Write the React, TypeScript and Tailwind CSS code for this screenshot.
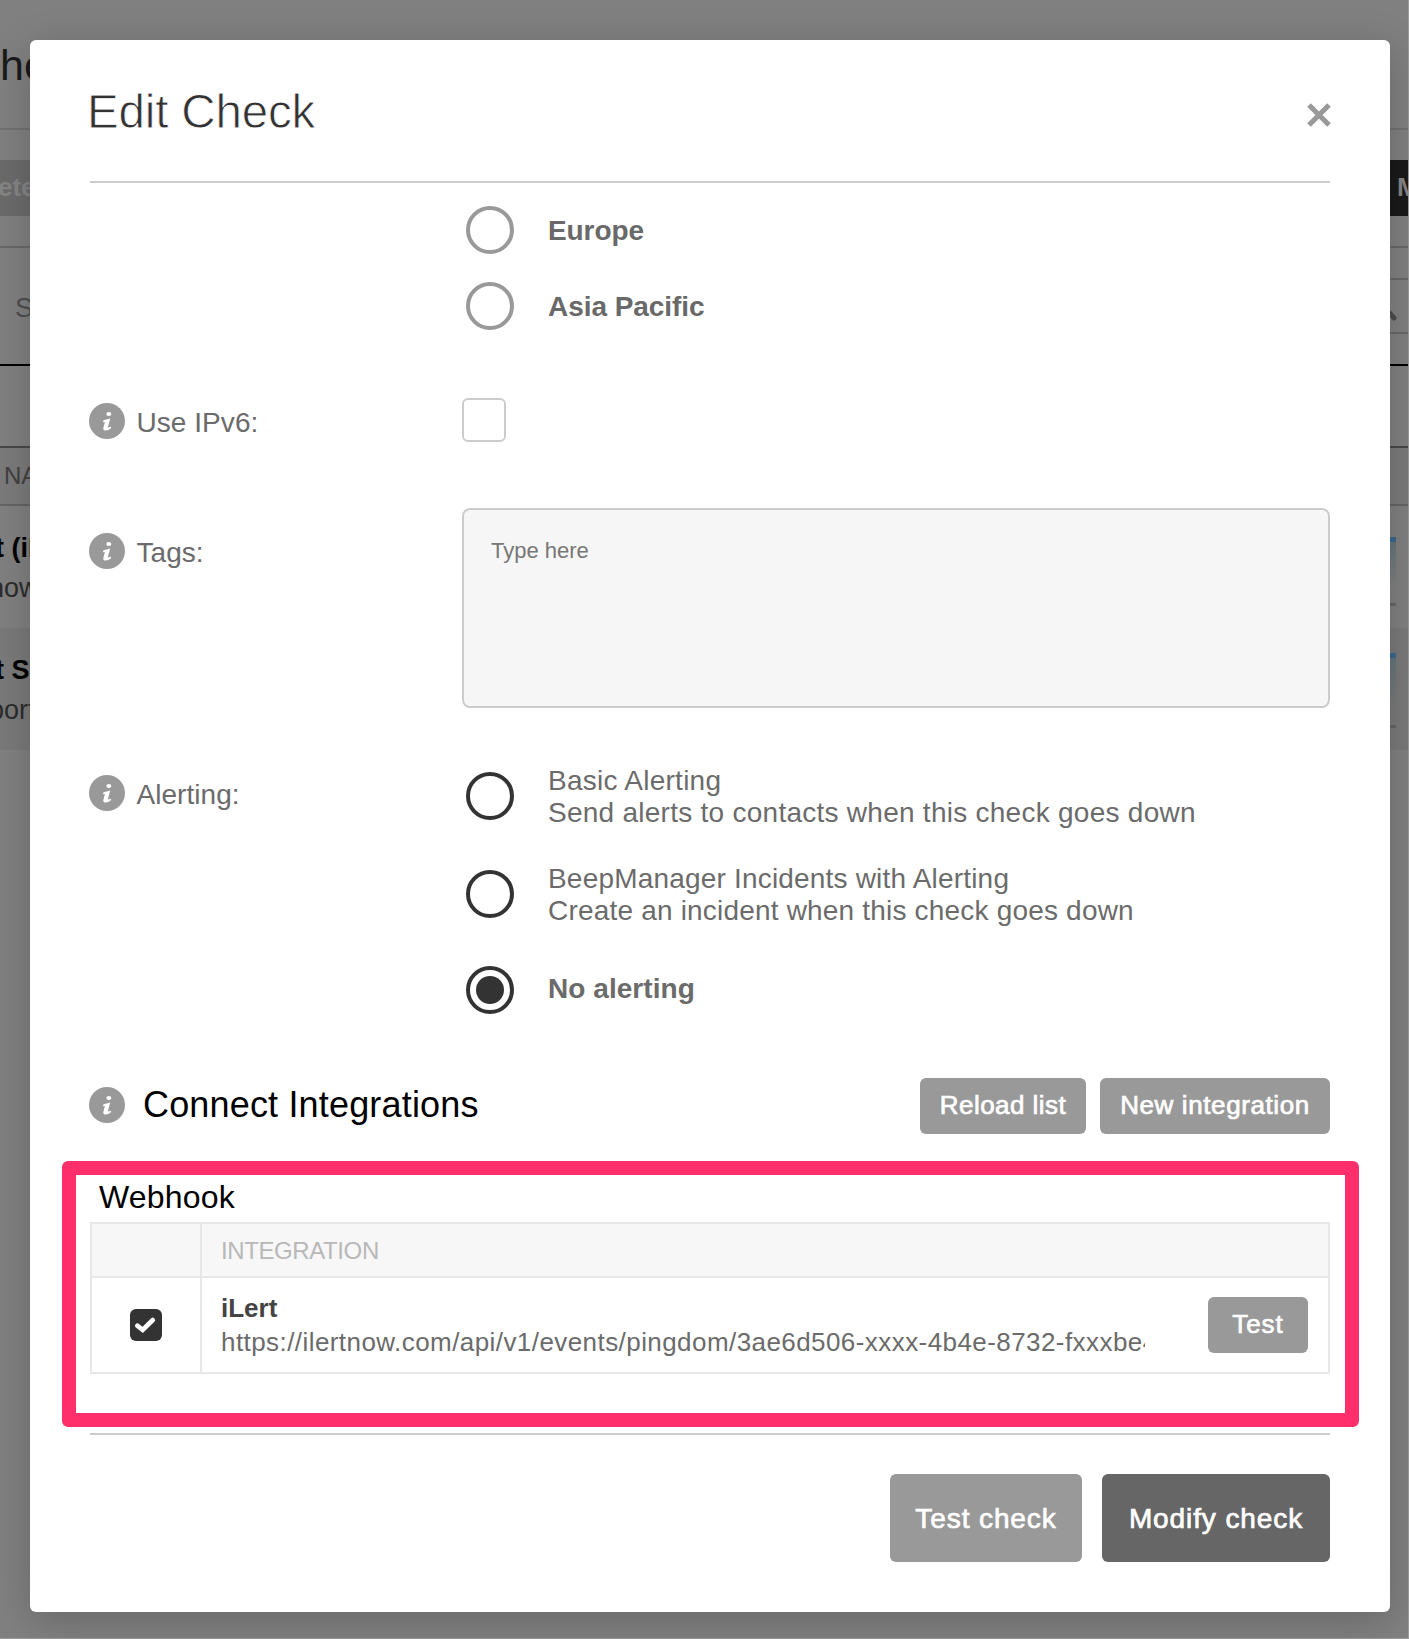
import React from "react";

function InfoIcon() {
  return (
    <svg viewBox="0 0 36 36" className="-ml-px size-9 shrink-0" aria-hidden="true">
      <circle cx="18" cy="18" r="18" fill="#999" />
      <ellipse cx="19.8" cy="11" rx="2.5" ry="2.1" fill="#fff" />
      <path
        d="M14.6 17.2 L21.2 15.6 L18.8 24.6 Q19.9 24.7 21.5 23.6 L22.2 24.9 Q19.5 27.6 16.6 27.6 Q13.7 27.6 14.4 24.8 L15.9 19 L13.8 19.2 Z"
        fill="#fff"
      />
    </svg>
  );
}

function Label({ children }: { children: React.ReactNode }) {
  return (
    <div className="flex h-9 items-center gap-[11.5px] text-[28px] leading-9 tracking-[0.05px] text-[#6b6b6b]">
      <InfoIcon />
      <span className="mt-[4px]">{children}</span>
    </div>
  );
}

function Radio({ dark, checked }: { dark?: boolean; checked?: boolean }) {
  return (
    <span
      className={`flex size-12 shrink-0 items-center justify-center rounded-full border-4 ${
        dark ? "border-[#333]" : "border-[#999]"
      }`}
    >
      {checked && <span className="size-7 rounded-full bg-[#333]" />}
    </span>
  );
}

function SmallButton({ children, className }: { children: React.ReactNode; className: string }) {
  return (
    <button
      className={`flex h-14 items-center justify-center rounded-md bg-[#999] pb-[2px] text-[26px] leading-8 text-white [-webkit-text-stroke:0.7px_#fff] ${className}`}
    >
      {children}
    </button>
  );
}

function Backdrop() {
  return (
    <div className="flex h-[1639px] w-[1409px] flex-col overflow-hidden whitespace-nowrap bg-[#808080]">
      <div className="h-[130px] shrink-0 border-b-2 border-[#717171] pt-[40px]">
        <div className="text-[43px] leading-[50px] text-[#1a1a1a]">hecks</div>
      </div>
      <div className="flex h-[118px] shrink-0 justify-between border-b-2 border-[#686868] pt-[30px]">
        <div className="h-14 w-[60px] bg-[#6b6b6b] text-[26px] font-bold leading-[54px] text-[#858585]">
          <span className="-ml-[2px]">ete</span>
        </div>
        <div className="h-14 w-[60px] bg-[#1a1a1a] pl-[48px] text-[26px] font-bold leading-[54px] text-[#858585]">M</div>
      </div>
      <div className="flex h-[118px] shrink-0 items-start justify-between border-b-2 border-black pt-[30px]">
        <div className="pl-[15px] text-[27px] leading-[60px] text-[#4f4f4f]">S</div>
        <div className="flex h-14 w-[60px] justify-end border-y-2 border-[#686868] pr-[12px] pt-[26px]">
          <svg viewBox="0 0 16 16" className="size-4">
            <path d="M2 0 L13 12" stroke="#4d4d4d" strokeWidth="5" strokeLinecap="round" />
          </svg>
        </div>
      </div>
      <div className="h-[82px] shrink-0 border-b-2 border-[#484848]" />
      <div className="h-[58px] shrink-0 border-b-2 border-[#646464] bg-[#7b7b7b] pl-1 text-[24px] leading-[56px] text-[#404040]">
        NAME
      </div>
      <CheckRow shade="bg-[#808080]" title="t (iLert)" sub="now.com" chart="pt-[31px]" fill="h-[44px]" />
      <CheckRow shade="bg-[#7a7a7a]" title="t Site" sub="port.com" chart="pt-[25px]" fill="h-[50px]" />
    </div>
  );
}

function CheckRow({
  shade,
  title,
  sub,
  chart,
  fill,
}: {
  shade: string;
  title: string;
  sub: string;
  chart: string;
  fill: string;
}) {
  return (
    <div className={`flex h-[122px] shrink-0 justify-between ${shade}`}>
      <div className="pt-[22px]">
        <div className="-ml-[5px] text-[27px] font-bold leading-10 text-black">{title}</div>
        <div className="-ml-[11px] text-[27px] leading-10 text-[#2c2c2c]">{sub}</div>
      </div>
      <div className={`mr-[13px] w-10 ${chart}`}>
        <div className="h-[5px] bg-[#3a688d]" />
        <div className={`bg-linear-to-b from-[#65757c] to-transparent ${fill}`} />
        <div className="mt-[17px] h-[3px] bg-[#666]" />
      </div>
    </div>
  );
}

export default function App() {
  return (
    <div className="relative h-[1639px] w-[1409px] overflow-hidden font-['Liberation_Sans',Arial,sans-serif]">
      <Backdrop />
      <div className="absolute inset-0 border-b border-r border-[#9c9c9c] pl-[30px] pt-10">
        <div className="h-[1572px] w-[1360px] rounded-md bg-white px-[60px] shadow-[0_8px_40px_rgba(0,0,0,0.2)]">
          <header className="flex h-[143px] items-start justify-between border-b-2 border-[#ccc]">
            <h1 className="-ml-[3px] mt-[44px] text-[47.5px] leading-[56px] tracking-[-0.15px] text-[#333] [-webkit-text-stroke:0.8px_#fff]">
              Edit Check
            </h1>
            <svg viewBox="0 0 24 24" className="-mr-px mt-[63px] size-6">
              <path d="M2 2 L22 22 M22 2 L2 22" stroke="#999" strokeWidth="5.2" />
            </svg>
          </header>

          <div className="ml-[376px] flex flex-col gap-7 pt-[23px] text-[28px] font-bold leading-8 text-[#696969]">
            <div className="flex items-center gap-[34px]">
              <Radio />
              <span className="mt-[2px] tracking-[-0.1px]">Europe</span>
            </div>
            <div className="flex items-center gap-[34px]">
              <Radio />
              <span className="mt-[2px] tracking-[-0.05px]">Asia Pacific</span>
            </div>
          </div>

          <div className="mt-[68px] grid grid-cols-[372px_1fr]">
            <div className="mt-[5px]">
              <Label>Use IPv6:</Label>
            </div>
            <span className="size-11 rounded-[6px] border-2 border-[#ccc]" />
          </div>

          <div className="mt-[66px] grid grid-cols-[372px_1fr]">
            <div className="mt-[25px]">
              <Label>Tags:</Label>
            </div>
            <div className="h-[200px] rounded-lg border-2 border-[#ccc] bg-[#f6f6f6] pl-[27px] pt-[27px] text-[22px] leading-7 text-[#777]">
              Type here
            </div>
          </div>

          <div className="mt-[57px] grid h-[249px] grid-cols-[372px_1fr]">
            <div className="mt-[10px]">
              <Label>Alerting:</Label>
            </div>
            <div className="pl-1 text-[28px] leading-8 tracking-[0.26px] text-[#6b6b6b]">
              <div className="flex h-16 gap-[34px]">
                <div className="mt-[7px]">
                  <Radio dark />
                </div>
                <div>
                  Basic Alerting
                  <br />
                  Send alerts to contacts when this check goes down
                </div>
              </div>
              <div className="mt-[34px] flex h-16 gap-[34px]">
                <div className="mt-[7px]">
                  <Radio dark />
                </div>
                <div className="tracking-[0.19px]">
                  BeepManager Incidents with Alerting
                  <br />
                  Create an incident when this check goes down
                </div>
              </div>
              <div className="mt-[39px] flex items-center gap-[34px]">
                <Radio dark checked />
                <span className="-mt-[2px] font-bold tracking-[0.05px]">No alerting</span>
              </div>
            </div>
          </div>

          <div className="mt-16 flex h-14 items-center">
            <div className="-mt-[2px]">
              <InfoIcon />
            </div>
            <h2 className="-mt-[3px] ml-[18px] text-[36px] leading-10 tracking-[0.17px] text-black">
              Connect Integrations
            </h2>
            <SmallButton className="ml-auto w-[166px] tracking-[0.45px]">Reload list</SmallButton>
            <SmallButton className="ml-[14px] w-[230px] tracking-[0.6px]">New integration</SmallButton>
          </div>

          <section className="relative mt-[43px]">
            <h3 className="ml-[9px] h-[45px] text-[32px] leading-10 tracking-[0.2px] text-black">Webhook</h3>
            <div className="border-2 border-[#e7e7e7]">
              <div className="flex h-[54px] border-b-2 border-[#e7e7e7] bg-[#f7f7f7]">
                <div className="w-[110px] border-r-2 border-[#e7e7e7]" />
                <div className="pl-[19px] text-[24px] leading-[53px] tracking-[-0.4px] text-[#b8b8b8]">INTEGRATION</div>
              </div>
              <div className="flex h-[94px] items-center">
                <div className="flex h-full w-[110px] items-center justify-center border-r-2 border-[#e7e7e7] pr-px">
                  <span className="flex size-8 items-center justify-center rounded-[6px] bg-[#333]">
                    <svg viewBox="0 0 32 32" className="size-8">
                      <path
                        d="M7.3 16.6 L12.7 21 L22.8 11"
                        fill="none"
                        stroke="#fff"
                        strokeWidth="4.6"
                        strokeLinecap="round"
                      />
                    </svg>
                  </span>
                </div>
                <div className="ml-[19px] w-[924px] overflow-hidden whitespace-nowrap text-[26px] leading-[34px]">
                  <div className="font-bold text-[#444]">iLert</div>
                  <div className="tracking-[0.43px] text-[#6b6b6b]">
                    https://ilertnow.com/api/v1/events/pingdom/3ae6d506-xxxx-4b4e-8732-fxxxbe4
                  </div>
                </div>
                <SmallButton className="ml-auto mr-5 w-[100px] tracking-[1px]">Test</SmallButton>
              </div>
            </div>
            <div className="pointer-events-none absolute -left-[28px] -top-[16px] h-[266px] w-[1297px] rounded-md border-[14px] border-[#ff2f6b]" />
          </section>

          <footer className="mt-[59px] flex justify-end gap-5 border-t-2 border-[#ccc] pt-[39px] text-[28px] leading-8 text-white [-webkit-text-stroke:0.7px_#fff]">
            <button className="flex h-[88px] w-[192px] items-center justify-center rounded-md bg-[#999] pt-[2px] tracking-[0.9px]">
              Test check
            </button>
            <button className="flex h-[88px] w-[228px] items-center justify-center rounded-md bg-[#666] pt-[2px] tracking-[0.9px]">
              Modify check
            </button>
          </footer>
        </div>
      </div>
    </div>
  );
}
